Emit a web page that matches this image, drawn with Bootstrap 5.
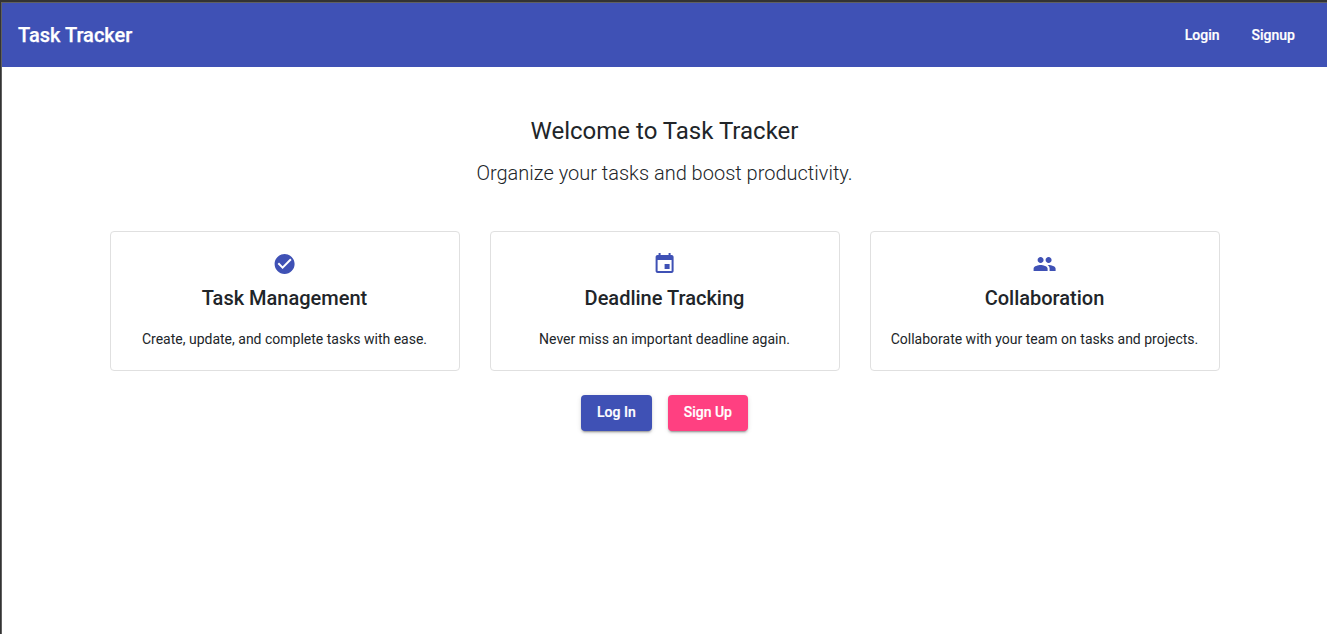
<!DOCTYPE html>
<html lang="en">
<head>
<meta charset="utf-8">
<meta name="viewport" content="width=device-width, initial-scale=1">
<title>Task Tracker</title>
<link href="https://cdn.jsdelivr.net/npm/bootstrap@5.3.0/dist/css/bootstrap.min.css" rel="stylesheet">
<style>
  html, body { height: 100%; }
  body { font-family: Roboto, sans-serif; color: #212529; background: #fff; overflow: hidden; }
  .frame { border-top: 2px solid #333; border-left: 1px solid #333; }
  .frame-inner { border-top: 1px solid #606060; border-left: 1px solid #606060; }
  .topbar { height: 64px; padding: 0 16px; background: #3f51b5; color: #fff; }
  .brand { font-size: 20px; font-weight: 500; line-height: 32px; color: #fff; -webkit-text-stroke: .25px #fff; }
  .topbar .nav-link { font-size: 14px; font-weight: 500; line-height: 36px; padding: 0 16px; color: #fff; -webkit-text-stroke: .2px #fff; }
  .features { width: 1140px; --bs-gutter-x: 30px; }
  .features .row { --bs-gutter-x: 30px; }
  .welcome { font-size: 24px; font-weight: 400; line-height: 32px; margin: 0 0 16px; }
  .tagline { font-size: 20px; font-weight: 300; line-height: 20px; margin: 0; }
  .feature { height: 140px; border: 1px solid #e0e0e0; border-radius: 4px; padding-top: 20px; color: #212529; }
  .feature svg { width: 24px; height: 24px; fill: #3f51b5; }
  .feature h5 { font-size: 20px; font-weight: 500; line-height: 24px; margin: 10px 0 19px; }
  .feature p { font-size: 14px; line-height: 20px; margin: 0; }
  .action { height: 36px; padding: 0 16px 2px; border: 0; border-radius: 4px; font-size: 14px; font-weight: 500; line-height: 34px; color: #fff; -webkit-text-stroke: .2px #fff;
    box-shadow: 0 3px 1px -2px rgba(0,0,0,.2), 0 2px 2px rgba(0,0,0,.14), 0 1px 5px rgba(0,0,0,.12); }
  .action-login { background: #3f51b5; }
  .action-signup { background: #ff4081; }
</style>
</head>
<body>
<div class="frame h-100"><div class="frame-inner h-100">
  <nav class="topbar d-flex align-items-center justify-content-between">
    <a class="brand text-decoration-none" href="#">Task Tracker</a>
    <div class="nav">
      <a class="nav-link" href="#">Login</a>
      <a class="nav-link" href="#">Signup</a>
    </div>
  </nav>
  <main class="container features mw-100 mt-5 text-center">
    <h1 class="welcome">Welcome to Task Tracker</h1>
    <p class="tagline">Organize your tasks and boost productivity.</p>
    <div class="row mt-5">
      <div class="col-4">
        <div class="card feature">
          <div class="d-flex justify-content-center"><svg viewBox="0.4 0 24 24"><path d="M12 2C6.48 2 2 6.48 2 12s4.48 10 10 10 10-4.48 10-10S17.52 2 12 2zm-2 15-5-5 1.41-1.41L10 14.17l7.59-7.59L19 8l-9 9z"/></svg></div>
          <h5>Task Management</h5>
          <p>Create, update, and complete tasks with ease.</p>
        </div>
      </div>
      <div class="col-4">
        <div class="card feature">
          <div class="d-flex justify-content-center"><svg viewBox="0.4 0 24 24"><path d="M17 12h-5v5h5v-5zM16 1v2H8V1H6v2H5c-1.11 0-1.99.9-1.99 2L3 19c0 1.1.89 2 2 2h14c1.1 0 2-.9 2-2V5c0-1.1-.9-2-2-2h-1V1h-2zm3 18H5V8h14v11z"/></svg></div>
          <h5>Deadline Tracking</h5>
          <p>Never miss an important deadline again.</p>
        </div>
      </div>
      <div class="col-4">
        <div class="card feature">
          <div class="d-flex justify-content-center"><svg viewBox="0.4 0 24 24"><path d="M16 11c1.66 0 2.99-1.34 2.99-3S17.66 5 16 5c-1.66 0-3 1.34-3 3s1.34 3 3 3zm-8 0c1.66 0 2.99-1.34 2.99-3S9.66 5 8 5C6.34 5 5 6.34 5 8s1.34 3 3 3zm0 2c-2.33 0-7 1.17-7 3.5V19h14v-2.5c0-2.33-4.67-3.5-7-3.5zm8 0c-.29 0-.62.02-.97.05 1.16.84 1.97 1.97 1.97 3.45V19h6v-2.5c0-2.33-4.67-3.5-7-3.5z"/></svg></div>
          <h5>Collaboration</h5>
          <p>Collaborate with your team on tasks and projects.</p>
        </div>
      </div>
    </div>
    <div class="d-flex justify-content-center gap-3 mt-4">
      <button class="action action-login" type="button">Log In</button>
      <button class="action action-signup" type="button">Sign Up</button>
    </div>
  </main>
</div></div>
<script src="https://cdn.jsdelivr.net/npm/bootstrap@5.3.0/dist/js/bootstrap.bundle.min.js"></script>
</body>
</html>
